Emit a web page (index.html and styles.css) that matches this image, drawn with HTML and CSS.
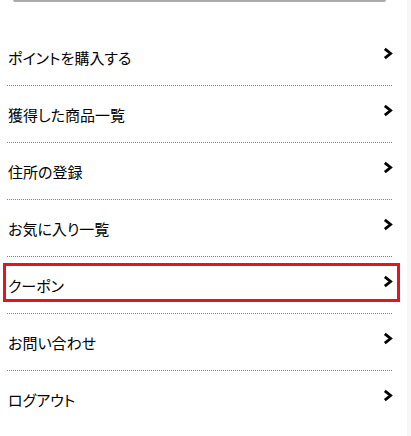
FILE: index.html
```html
<!DOCTYPE html>
<html lang="ja">
<head>
<meta charset="utf-8">
<link rel="stylesheet" href="styles.css">
</head>
<body>
<div class="page">
  <div class="top-edge"></div>
  <ul class="menu">
    <li class="item"><span class="label">ポイントを購入する</span><svg class="chev" viewBox="0 0 10 13"><polyline points="1.8,1.8 7.6,6.5 1.8,11.2"/></svg></li>
    <li class="item"><span class="label">獲得した商品一覧</span><svg class="chev" viewBox="0 0 10 13"><polyline points="1.8,1.8 7.6,6.5 1.8,11.2"/></svg></li>
    <li class="item"><span class="label">住所の登録</span><svg class="chev" viewBox="0 0 10 13"><polyline points="1.8,1.8 7.6,6.5 1.8,11.2"/></svg></li>
    <li class="item"><span class="label">お気に入り一覧</span><svg class="chev" viewBox="0 0 10 13"><polyline points="1.8,1.8 7.6,6.5 1.8,11.2"/></svg></li>
    <li class="item highlighted"><span class="label">クーポン</span><svg class="chev" viewBox="0 0 10 13"><polyline points="1.8,1.8 7.6,6.5 1.8,11.2"/></svg></li>
    <li class="item"><span class="label">お問い合わせ</span><svg class="chev" viewBox="0 0 10 13"><polyline points="1.8,1.8 7.6,6.5 1.8,11.2"/></svg></li>
    <li class="item last"><span class="label">ログアウト</span><svg class="chev" viewBox="0 0 10 13"><polyline points="1.8,1.8 7.6,6.5 1.8,11.2"/></svg></li>
  </ul>
</div>
</body>
</html>
```
FILE: styles.css
```css
html {
  background: #f7f7f7;
}
body {
  margin: 0;
  font-family: "Noto Sans CJK JP", "Noto Sans", sans-serif;
  color: #000;
}
.page {
  width: 407px;
  height: 436px;
  background: #fff;
  overflow: hidden;
  padding: 0 15px 0 7px;
  box-sizing: border-box;
}
.top-edge {
  width: 373px;
  height: 2px;
  margin-left: 6px;
  background: #aaa;
  border-radius: 0 0 2px 2px;
}
.menu {
  list-style: none;
  margin: 27px 0 0;
  padding: 0;
}
.item {
  position: relative;
  height: 57px;
  box-sizing: border-box;
  border-bottom: 1px dotted #e25555;
  display: flex;
  align-items: center;
  justify-content: space-between;
  font-size: 15px;
}
.item.last {
  border-bottom: none;
}
.label {
  line-height: 1;
  margin-left: 1px;
  font-feature-settings: "palt";
  font-weight: 400;
}
.chev {
  width: 10px;
  height: 13px;
  margin-bottom: 8px;
  margin-right: -1px;
}
.chev polyline {
  fill: none;
  stroke: #000;
  stroke-width: 2.8;
}
.highlighted::after {
  content: "";
  position: absolute;
  left: -4px;
  right: -8px;
  top: 6px;
  bottom: 11px;
  border: 3px solid #e3161f;
}
```
